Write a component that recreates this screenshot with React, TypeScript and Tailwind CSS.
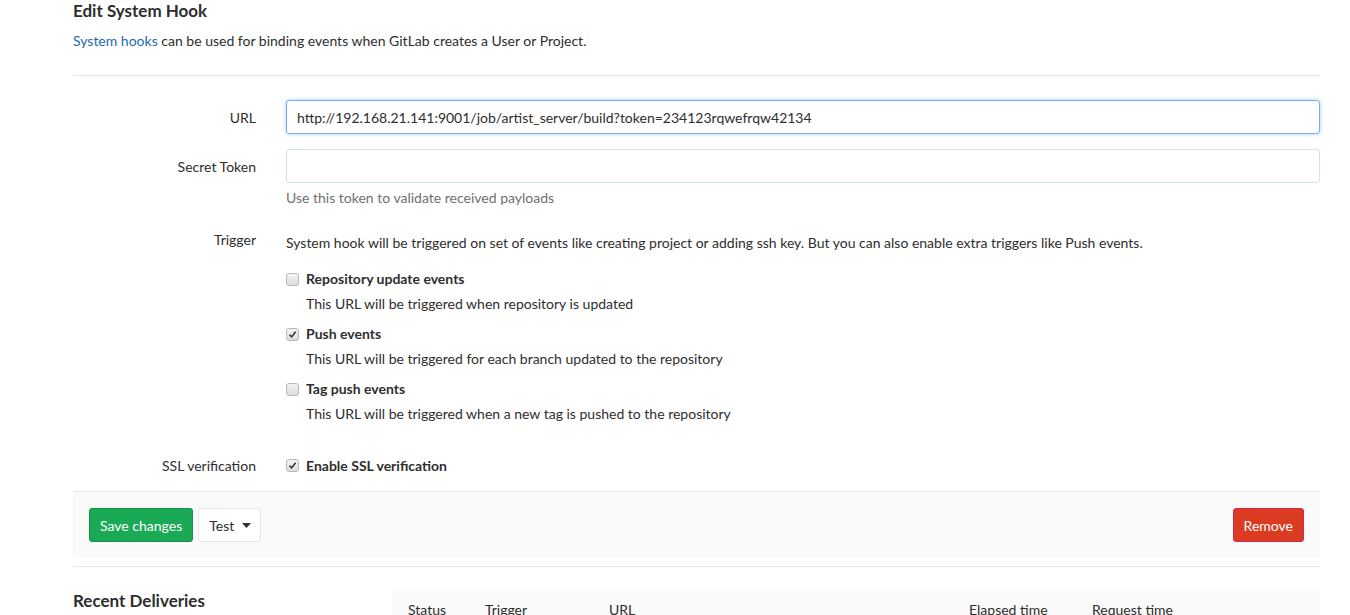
import { useState } from "react";

const triggers = [
  {
    name: "Repository update events",
    help: "This URL will be triggered when repository is updated",
    checked: false,
  },
  {
    name: "Push events",
    help: "This URL will be triggered for each branch updated to the repository",
    checked: true,
  },
  {
    name: "Tag push events",
    help: "This URL will be triggered when a new tag is pushed to the repository",
    checked: false,
  },
];

function Check({ checked }: { checked: boolean }) {
  return (
    <span className="w-[13px] h-[13px] rounded-[3px] border border-[#b8b8b8] bg-gradient-to-b from-[#f4f4f4] to-[#dcdcdc] flex items-center justify-center shrink-0">
      {checked && (
        <svg width="9" height="9" viewBox="0 0 9 9">
          <path d="M1.5 4.8 L3.6 6.9 L7.6 1.8" fill="none" stroke="#333" strokeWidth="1.6" />
        </svg>
      )}
    </span>
  );
}

export default function App() {
  const [url, setUrl] = useState(
    "http://192.168.21.141:9001/job/artist_server/build?token=234123rqwefrqw42134"
  );

  return (
    <div className="min-h-screen bg-white text-[#2e2e2e] text-[14px] font-['Lato','Liberation_Sans',sans-serif] pl-[73px] pr-[30px]">
      <h3 className="text-[17px] font-bold leading-[22px]">Edit System Hook</h3>
      <p className="mt-[9px] leading-[20px]">
        <span className="text-[#1b69b6]">System hooks</span> can be used for binding events when GitLab
        creates a User or Project.
      </p>
      <hr className="mt-[24px] border-t border-[#e5e5e5]" />

      <div className="pt-[24px]">
        <div className="flex items-center">
          <label className="w-[183px] text-right">URL</label>
          <input
            value={url}
            onChange={(e) => setUrl(e.target.value)}
            className="ml-[30px] flex-1 h-[34px] px-[10px] border border-[#73afea] rounded-[3px] shadow-[0_0_4px_rgba(115,175,234,0.6)] outline-none text-[#2e2e2e]"
          />
        </div>

        <div className="flex items-center mt-[15px]">
          <label className="w-[183px] text-right">Secret Token</label>
          <input className="ml-[30px] flex-1 h-[34px] px-[10px] border border-[#cfe1f3] rounded-[3px] outline-none" />
        </div>
        <p className="ml-[213px] mt-[5px] text-[#707070] leading-[20px]">
          Use this token to validate received payloads
        </p>

        <div className="flex mt-[25px]">
          <label className="w-[183px] text-right leading-[20px] -mt-[3px]">Trigger</label>
          <div className="ml-[30px] flex-1">
            <p className="leading-[20px]">
              System hook will be triggered on set of events like creating project or adding ssh key. But you
              can also enable extra triggers like Push events.
            </p>
            <div className="mt-[16px] flex flex-col gap-[10px]">
              {triggers.map((t) => (
                <div key={t.name}>
                  <div className="flex items-center gap-[7px] leading-[20px]">
                    <Check checked={t.checked} />
                    <span className="font-bold">{t.name}</span>
                  </div>
                  <p className="ml-[20px] mt-[5px] leading-[20px]">{t.help}</p>
                </div>
              ))}
            </div>
          </div>
        </div>

        <div className="flex items-center mt-[31px]">
          <label className="w-[183px] text-right">SSL verification</label>
          <div className="ml-[30px] flex items-center gap-[7px]">
            <Check checked />
            <span className="font-bold">Enable SSL verification</span>
          </div>
        </div>
      </div>

      <div className="mt-[15px] bg-[#fafafa] border-t border-[#e5e5e5] h-[67px] flex items-start justify-between pt-[16px] px-[16px]">
        <div className="flex items-center gap-[5px]">
          <button className="h-[34px] px-[10px] bg-[#1aaa55] border border-[#168f48] text-white rounded-[3px]">
            Save changes
          </button>
          <button className="h-[34px] pl-[10px] pr-[9px] bg-white border border-[#e5e5e5] rounded-[3px] flex items-center gap-[8px]">
            Test
            <svg width="9" height="5" viewBox="0 0 9 5">
              <path d="M0 0 H9 L4.5 5 Z" fill="#2e2e2e" />
            </svg>
          </button>
        </div>
        <button className="h-[34px] px-[10px] bg-[#db3b21] border border-[#d22852] text-white rounded-[3px]">
          Remove
        </button>
      </div>
      <hr className="mt-[8px] border-t border-[#e5e5e5]" />

      <div className="flex mt-[24px]">
        <h4 className="w-[319px] text-[17px] font-bold leading-[22px] mt-[-1px]">Recent Deliveries</h4>
        <div className="flex-1 bg-[#fafafa] h-[40px] flex items-start pt-[9px] px-[16px] leading-[20px]">
          <span className="w-[77px]">Status</span>
          <span className="w-[124px]">Trigger</span>
          <span className="w-[360px]">URL</span>
          <span className="w-[123px]">Elapsed time</span>
          <span>Request time</span>
        </div>
      </div>
    </div>
  );
}
